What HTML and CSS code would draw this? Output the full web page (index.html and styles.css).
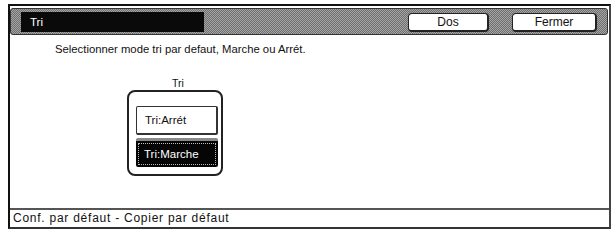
FILE: index.html
```html
<!DOCTYPE html>
<html lang="fr">
<head>
<meta charset="utf-8">
<title>Tri</title>
<link rel="stylesheet" href="styles.css">
</head>
<body>
<div class="screen">
  <div class="header">
    <div class="title">Tri</div>
    <div class="spacer"></div>
    <button class="hbtn dos">Dos</button>
    <button class="hbtn fermer">Fermer</button>
  </div>
  <div class="main">
    <p class="instr">Selectionner mode tri par defaut, Marche ou Arrét.</p>
    <div class="group">
      <div class="glabel">Tri</div>
      <div class="gbox">
        <button class="opt off">Tri:Arrét</button>
        <button class="opt on"><span>Tri:Marche</span></button>
      </div>
    </div>
  </div>
  <div class="status">Conf. par défaut - Copier par défaut</div>
</div>
</body>
</html>
```

FILE: styles.css
```css
html, body {
  margin: 0;
  padding: 0;
  background: #fff;
  font-family: "Liberation Sans", Arial, sans-serif;
  color: #111;
}

.screen {
  margin: 4px 0 0 8px;
  width: 603px;
  height: 225px;
  box-sizing: border-box;
  border: 2px solid #111;
  border-right-color: #444;
  border-bottom-color: #333;
  display: flex;
  flex-direction: column;
}

.header {
  margin: 2px 1px 0 0;
  height: 27px;
  box-sizing: border-box;
  background-color: #8a8a8a;
  background-image: repeating-conic-gradient(#6f6f6f 0 25%, #a4a4a4 0 50%);
  background-size: 2px 2px;
  border: 1px solid #333;
  border-radius: 3px;
  display: flex;
  align-items: center;
  padding: 0 10px 0 10px;
}

.title {
  width: 183px;
  height: 20px;
  background: #0a0a0a;
  color: #fff;
  font-size: 11.5px;
  line-height: 20px;
  padding-left: 9px;
  box-sizing: border-box;
  margin-top: 1px;
}

.spacer { flex: 1; }

.hbtn {
  height: 19px;
  box-sizing: border-box;
  background: #fff;
  border: 1px solid #222;
  border-right: 2px solid #222;
  border-bottom: 2px solid #222;
  border-radius: 4px;
  font-family: "Liberation Sans", Arial, sans-serif;
  font-size: 12px;
  color: #111;
  padding: 0;
  margin-top: 1px;
}
.dos { width: 81px; margin-right: 23px; }
.fermer { width: 85px; }

.main {
  flex: 1;
  display: flex;
  flex-direction: column;
}

.instr {
  margin: 8px 0 0 45px;
  font-size: 11.3px;
  line-height: 13px;
}

.group {
  margin: 21px 0 0 117px;
  width: 96px;
  display: flex;
  flex-direction: column;
  align-items: center;
}

.glabel {
  font-size: 10.5px;
  line-height: 12px;
  margin-left: 6px;
}

.gbox {
  margin-top: 1px;
  width: 96px;
  height: 86px;
  box-sizing: border-box;
  border: 2px solid #222;
  border-radius: 8px;
  padding: 14px 3px 0 7px;
  display: flex;
  flex-direction: column;
  gap: 3px;
}

.opt {
  width: 82px;
  height: 29px;
  box-sizing: border-box;
  font-family: "Liberation Sans", Arial, sans-serif;
  font-size: 11.5px;
  text-align: left;
  padding: 0 0 0 8px;
  border-radius: 2px;
}

.off {
  background: #fff;
  color: #111;
  border: 1px solid #333;
  border-right: 2px solid #333;
  border-bottom: 2px solid #333;
}

.on {
  background: #050505;
  color: #fff;
  border: none;
  border-top: 3px solid #8a8a8a;
  padding: 2px;
}
.on span {
  display: flex;
  align-items: center;
  height: 100%;
  box-sizing: border-box;
  border: 1px dotted #bbb;
  padding-left: 5px;
}

.status {
  height: 19px;
  box-sizing: border-box;
  border-top: 2px solid #555;
  font-size: 12px;
  letter-spacing: 0.75px;
  line-height: 17px;
  padding-left: 3px;
}
```
